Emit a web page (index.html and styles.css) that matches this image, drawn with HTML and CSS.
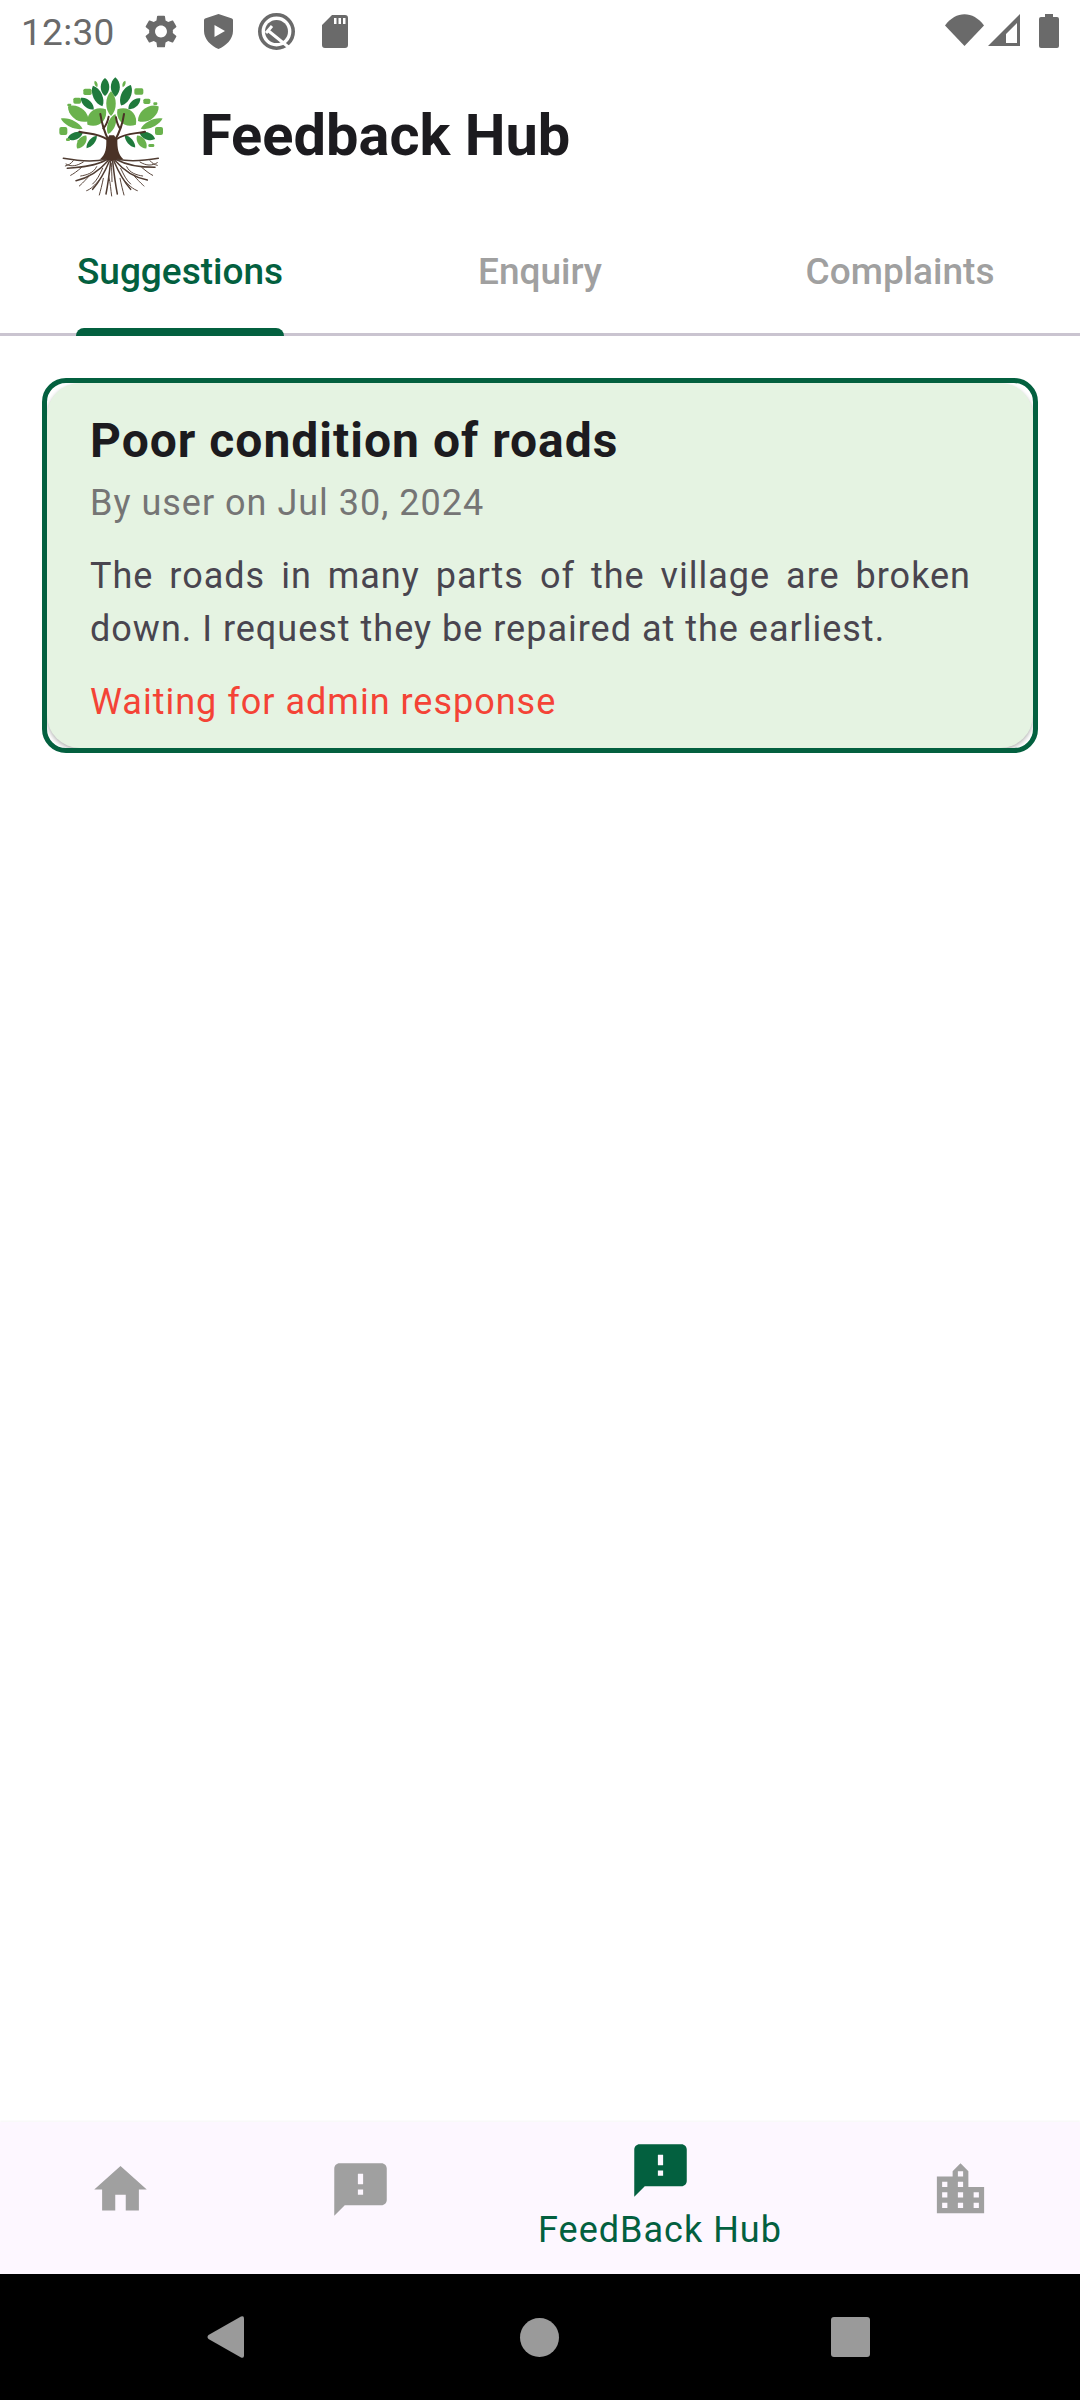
FILE: index.html
```html
<!DOCTYPE html>
<html lang="en">
<head>
<meta charset="utf-8">
<title>Feedback Hub</title>
<link rel="stylesheet" href="styles.css">
</head>
<body>
<div class="app">
  <div class="status">
    <span class="time">12:30</span>
    <svg class="si gear" viewBox="2.5 2 19 20"><path fill-rule="evenodd" d="M19.14 12.94c.04-.3.06-.61.06-.94 0-.32-.02-.64-.07-.94l2.03-1.58c.18-.14.23-.41.12-.61l-1.92-3.32c-.12-.22-.37-.29-.59-.22l-2.39.96c-.5-.38-1.03-.7-1.62-.94l-.36-2.54c-.04-.24-.24-.41-.48-.41h-3.84c-.24 0-.43.17-.47.41l-.36 2.54c-.59.24-1.13.57-1.62.94l-2.39-.96c-.22-.08-.47 0-.59.22L2.74 8.87c-.12.21-.08.47.12.61l2.03 1.58c-.05.3-.09.63-.09.94s.02.64.07.94l-2.03 1.58c-.18.14-.23.41-.12.61l1.92 3.32c.12.22.37.29.59.22l2.39-.96c.5.38 1.03.7 1.62.94l.36 2.54c.05.24.24.41.48.41h3.84c.24 0 .44-.17.47-.41l.36-2.54c.59-.24 1.13-.56 1.62-.94l2.39.96c.22.08.47 0 .59-.22l1.92-3.32c.12-.22.07-.47-.12-.61l-2.01-1.58zM12 15.6c-1.98 0-3.6-1.62-3.6-3.6s1.62-3.6 3.6-3.6 3.6 1.62 3.6 3.6-1.62 3.6-3.6 3.6z"/></svg>
    <svg class="si shield" viewBox="0 0 29 35"><path fill-rule="evenodd" d="M14.5 0 L28 4.5 Q29 5 29 6 V17 C29 25 22 32 14.5 35 C7 32 0 25 0 17 V6 Q0 5 1 4.5 Z M10.5 11 V23 L21 17 Z"/></svg>
    <svg class="si q" viewBox="0 0 37 37">
      <circle class="q-ring" cx="18.5" cy="18.5" r="16.7"/>
      <circle cx="18.5" cy="18.5" r="11.5"/>
      <path class="q-cut" d="M8 20 L14 13 M10 17.5 L34 37"/>
    </svg>
    <svg class="si sd" viewBox="0 0 26 33"><path fill-rule="evenodd" d="M10 0 H23 Q26 0 26 3 V30 Q26 33 23 33 H3 Q0 33 0 30 V10 Z M12 3 V9 H14.5 V3 Z M16.5 3 V9 H19 V3 Z M21 3 V9 H23.5 V3 Z"/></svg>
    <span class="status-gap"></span>
    <svg class="si wifi" viewBox="0 0 39 32"><path d="M0 11.5 C11 -3.5 28 -3.5 39 11.5 L19.5 32 Z"/></svg>
    <svg class="si signal" viewBox="0 0 32 32"><path fill-rule="evenodd" d="M32 0 V32 H0 Z M29 9 L18 20 V29 H29 Z"/></svg>
    <svg class="si battery" viewBox="0 0 20 34"><path d="M6 0 H14 V3 H18 Q20 3 20 5 V32 Q20 34 18 34 H2 Q0 34 0 32 V5 Q0 3 2 3 H6 Z"/></svg>
  </div>

  <header class="header">
    <svg class="logo" viewBox="0 0 420 420" aria-label="Tree logo">
      <defs><path id="leaf" d="M0 -1 C.95 -.55 .95 .55 0 1 C-.95 .55 -.95 -.55 0 -1Z"/></defs>
      <g class="dark">
        <use href="#leaf" transform="translate(195 81) scale(18 27)"/>
        <use href="#leaf" transform="translate(226 81) scale(19 29)"/>
        <use href="#leaf" transform="translate(173 108) rotate(-25) scale(19 34)"/>
        <use href="#leaf" transform="translate(258 106) rotate(25) scale(20 34)"/>
        <use href="#leaf" transform="translate(142 131) rotate(-48) scale(16 26)"/>
        <use href="#leaf" transform="translate(283 131) rotate(48) scale(15 24)"/>
        <use href="#leaf" transform="translate(105 228) rotate(68) scale(15 25)"/>
        <use href="#leaf" transform="translate(155 246) rotate(40) scale(12 24)"/>
        <use href="#leaf" transform="translate(270 244) rotate(-40) scale(12 24)"/>
        <use href="#leaf" transform="translate(322 228) rotate(-68) scale(15 25)"/>
      </g>
      <g class="light">
        <use href="#leaf" transform="translate(213 131) scale(20 37)"/>
        <use href="#leaf" transform="translate(115 161) rotate(-55) scale(26 38)"/>
        <use href="#leaf" transform="translate(170 171) rotate(50) scale(32 36)"/>
        <use href="#leaf" transform="translate(260 171) rotate(-50) scale(32 36)"/>
        <use href="#leaf" transform="translate(325 161) rotate(55) scale(26 38)"/>
        <use href="#leaf" transform="translate(215 192) rotate(20) scale(16 32)"/>
        <use href="#leaf" transform="translate(95 191) rotate(-65) scale(15 36)"/>
        <use href="#leaf" transform="translate(335 191) rotate(65) scale(15 36)"/>
        <use href="#leaf" transform="translate(125 246) rotate(35) scale(16 24)"/>
        <use href="#leaf" transform="translate(305 246) rotate(-35) scale(16 24)"/>
        <rect x="58" y="201" width="24" height="24" rx="6"/>
        <rect x="345" y="201" width="24" height="24" rx="6"/>
        <rect x="130" y="86" width="25" height="19" rx="5"/>
        <rect x="283" y="85" width="27" height="19" rx="5"/>
        <rect x="100" y="113" width="23" height="18" rx="5"/>
        <rect x="310" y="116" width="21" height="16" rx="5"/>
        <rect x="82" y="131" width="12" height="8" rx="3"/>
        <rect x="340" y="127" width="12" height="8" rx="3"/>
        <use href="#leaf" transform="translate(168 72) rotate(-20) scale(6 10)"/>
        <use href="#leaf" transform="translate(252 72) rotate(20) scale(6 10)"/>
        <rect x="112" y="240" width="10" height="6" rx="3"/>
        <rect x="325" y="252" width="18" height="9" rx="4"/>
        <rect x="78" y="235" width="12" height="8" rx="3"/>
      </g>
      <path class="trunk" d="M199 240 C199 265 198 282 180 298 Q215 308 250 298 C234 282 232 265 232 240 L222 226 H208 Z"/>
      <g class="branches">
        <path d="M206 242 C196 222 186 195 181 162"/>
        <path d="M224 242 C236 222 248 192 252 162"/>
        <path d="M202 238 C172 218 145 222 118 215"/>
        <path d="M228 238 C258 218 285 222 315 215"/>
        <path d="M190 205 C200 195 203 185 206 170"/>
        <path d="M240 205 C232 195 230 185 228 172"/>
      </g>
      <g class="roots">
        <path d="M198 298 C160 306 110 302 70 295"/>
        <path d="M232 298 C270 306 315 302 355 295"/>
        <path d="M198 300 C165 318 125 322 82 325"/>
        <path d="M232 300 C265 318 305 322 345 322"/>
        <path d="M204 302 C180 330 150 352 108 362"/>
        <path d="M226 302 C250 330 280 352 322 360"/>
        <path d="M208 304 C195 335 178 365 158 388"/>
        <path d="M222 304 C235 335 252 365 272 388"/>
        <path d="M212 304 C208 340 204 372 198 402"/>
        <path d="M218 304 C222 340 226 372 232 402"/>
      </g>
      <g class="rootlets">
        <path d="M130 306 C110 318 95 322 78 312"/>
        <path d="M300 306 C320 318 335 318 352 308"/>
        <path d="M125 322 C110 335 100 342 92 346"/>
        <path d="M305 322 C320 335 330 342 338 346"/>
        <path d="M150 345 C135 362 125 372 118 378"/>
        <path d="M280 345 C295 362 305 372 312 378"/>
        <path d="M178 360 C165 375 152 388 140 392"/>
        <path d="M252 360 C265 375 280 388 292 392"/>
        <path d="M190 355 C186 375 182 390 178 405"/>
        <path d="M240 355 C244 375 248 390 252 405"/>
        <path d="M206 350 C212 370 212 390 215 408"/>
        <path d="M170 320 C160 340 140 345 122 348"/>
        <path d="M260 320 C270 340 290 345 308 348"/>
        <path d="M188 325 C178 345 172 360 158 372"/>
        <path d="M242 325 C252 345 258 360 272 372"/>
        <path d="M100 302 C92 312 85 316 76 318"/>
        <path d="M330 302 C338 312 345 314 352 316"/>
        <path d="M215 310 C214 325 216 345 216 365"/>
      </g>
    </svg>
    <h1 class="title">Feedback Hub</h1>
  </header>

  <nav class="tabs">
    <div class="tab active"><span class="tab-label">Suggestions<i class="indicator"></i></span></div>
    <div class="tab"><span class="tab-label">Enquiry</span></div>
    <div class="tab"><span class="tab-label">Complaints</span></div>
  </nav>

  <main class="content">
    <section class="frame">
      <article class="card">
        <h2 class="card-title">Poor condition of roads</h2>
        <p class="meta">By user on Jul 30, 2024</p>
        <p class="body">The roads in many parts of the village are broken down. I request they be repaired at the earliest.</p>
        <p class="state">Waiting for admin response</p>
      </article>
    </section>
  </main>

  <nav class="bottom">
    <div class="item"><svg class="nav-icon" viewBox="0 0 24 24"><path d="M10 20v-6h4v6h5v-8h3L12 3 2 12h3v8z"/></svg></div>
    <div class="item"><svg class="nav-icon" viewBox="0 0 24 24"><path d="M20 2H4c-1.1 0-1.99.9-1.99 2L2 22l4-4h14c1.1 0 2-.9 2-2V4c0-1.1-.9-2-2-2zm-7 12h-2v-2h2v2zm0-4h-2V6h2v4z"/></svg></div>
    <div class="item selected"><svg class="nav-icon" viewBox="0 0 24 24"><path d="M20 2H4c-1.1 0-1.99.9-1.99 2L2 22l4-4h14c1.1 0 2-.9 2-2V4c0-1.1-.9-2-2-2zm-7 12h-2v-2h2v2zm0-4h-2V6h2v4z"/></svg><span class="item-label">FeedBack Hub</span></div>
    <div class="item"><svg class="nav-icon" viewBox="0 0 24 24"><path d="M15 11V5l-3-3-3 3v2H3v14h18V11h-6zm-8 8H5v-2h2v2zm0-4H5v-2h2v2zm0-4H5V9h2v2zm6 8h-2v-2h2v2zm0-4h-2v-2h2v2zm0-4h-2V9h2v2zm0-4h-2V5h2v2zm6 12h-2v-2h2v2zm0-4h-2v-2h2v2z"/></svg></div>
  </nav>

  <div class="sysnav">
    <svg class="back" viewBox="0 0 37 42"><path d="M34 .6 Q37 -.6 37 2.5 V39.5 Q37 42.6 34 41.4 L1.5 23 Q-.5 21 1.5 19 Z"/></svg>
    <span class="home-dot"></span>
    <span class="recent"></span>
  </div>
</div>
</body>
</html>
```
FILE: styles.css
```css
* { box-sizing: border-box; }
html, body { margin: 0; padding: 0; background: #fff; }
body { font-family: Roboto, "Liberation Sans", sans-serif; }
.app { width: 1080px; height: 2400px; display: flex; flex-direction: column; overflow: hidden; }

.status { height: 60px; flex: none; display: flex; align-items: flex-start; padding: 0 21px 0 21px; color: #6a6a6a; }
.time { font-size: 37px; line-height: 36px; margin-top: 15px; width: 124px; letter-spacing: .3px; }
.si { display: block; fill: #6a6a6a; flex: none; }
.gear { width: 32px; height: 33px; margin-top: 15px; margin-right: 27px; }
.shield { width: 29px; height: 35px; margin-top: 14px; margin-right: 25px; }
.q { width: 37px; height: 37px; margin-top: 13px; margin-right: 27px; }
.q-ring { fill: none; stroke: #6a6a6a; stroke-width: 3.6; }
.q-cut { fill: none; stroke: #fff; stroke-width: 3; }
.sd { width: 26px; height: 33px; margin-top: 15px; }
.status-gap { flex: 1; }
.wifi { width: 39px; height: 32px; margin-top: 14px; margin-right: 4px; }
.signal { width: 32px; height: 32px; margin-top: 14px; margin-right: 19px; }
.battery { width: 20px; height: 34px; margin-top: 14px; }

.header { height: 140px; flex: none; display: flex; align-items: center; padding-left: 40px; gap: 20px; }
.logo { width: 140px; height: 140px; flex: none; }
.logo .dark { fill: #1f7a3c; }
.logo .light { fill: #6ab24d; }
.logo .trunk { fill: #4a3226; }
.logo .branches { fill: none; stroke: #4a3226; stroke-width: 6; stroke-linecap: round; }
.logo .roots { fill: none; stroke: #4f3c32; stroke-width: 4.5; stroke-linecap: round; }
.logo .rootlets { fill: none; stroke: #5a473d; stroke-width: 3; stroke-linecap: round; }
.title { margin: 10px 0 0; font-size: 57.75px; line-height: 64px; font-weight: 700; color: #1c1b1f; }

.tabs { height: 136px; flex: none; display: grid; grid-template-columns: repeat(3, 1fr); border-bottom: 3px solid #cac4d0; }
.tab { display: flex; justify-content: center; align-items: flex-start; padding-top: 50px; font-size: 37px; line-height: 44px; font-weight: 500; color: #a0a0a0; }
.tab-label { position: relative; height: 83px; }
.tab.active { color: #03603f; }
.indicator { position: absolute; left: -1px; right: -1px; bottom: -3px; height: 8px; background: #03603f; border-radius: 8px 8px 0 0; }

.content { flex: 1; padding: 42px 42px 0; }
.frame { border: 5.5px solid #03603f; border-radius: 24px; height: 375px; overflow: hidden; }
.card { height: 100%; background: #e5f3e2; border-radius: 33px; padding: 29.5px 62px 0 43px; box-shadow: 0 2px 4px rgba(0,0,0,.3); letter-spacing: 1px; }
.card-title { margin: 0; font-size: 48px; line-height: 56px; font-weight: 700; color: #1c1b1f; }
.meta { margin: 12px 0 0; font-size: 36px; line-height: 44px; color: #757575; }
.body { margin: 25px 0 0; font-size: 36px; line-height: 53px; color: #49454f; text-align: justify; }
.state { margin: 24px 0 0; font-size: 36px; line-height: 44px; color: #f44336; }

.bottom { height: 152px; flex: none; display: grid; grid-template-columns: 2fr 2fr 3fr 2fr; background: #fdf7ff; box-shadow: 0 -1px 2px rgba(0,0,0,.04); }
.item { display: flex; flex-direction: column; align-items: center; padding-top: 36px; }
.item.selected { padding-top: 17px; }
.nav-icon { width: 63px; height: 63px; fill: #a0a0a0; display: block; flex: none; }
.selected .nav-icon { fill: #03603f; }
.item-label { font-size: 36px; line-height: 44px; color: #03603f; margin-top: 6px; white-space: nowrap; letter-spacing: 1px; }

.sysnav { height: 126px; flex: none; background: #000; display: flex; align-items: center; padding-left: 207px; }
.back { width: 37px; height: 42px; fill: #9a9a9a; display: block; margin-right: 276px; }
.home-dot { width: 39px; height: 39px; border-radius: 50%; background: #9a9a9a; margin-right: 272px; }
.recent { width: 39px; height: 40px; border-radius: 3px; background: #9a9a9a; }
```
